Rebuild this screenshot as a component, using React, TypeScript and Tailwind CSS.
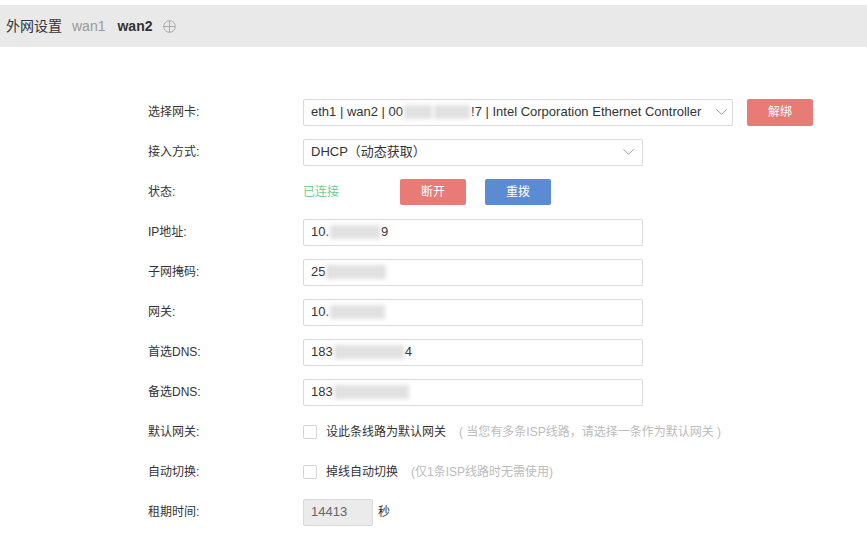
import React from "react";

const font = {
  fontFamily: '"Liberation Sans", "Noto Sans CJK SC", sans-serif',
};

const Blur = ({ w }: { w: number }) => (
  <span
    className="inline-block h-[14px] align-middle bg-[#e0e0e0] blur-[2px] mx-[1px]"
    style={{ width: w }}
  />
);

const Chevron = ({ right }: { right: string }) => (
  <svg width="11" height="7" viewBox="0 0 11 7" className={`absolute top-1/2 -translate-y-1/2 ${right}`}>
    <path d="M0.5 0.8 L5.5 5.8 L10.5 0.8" fill="none" stroke="#999" strokeWidth="1" />
  </svg>
);

const Row = ({ label, children }: { label: string; children: React.ReactNode }) => (
  <div className="flex h-10 items-center">
    <div className="w-[155px] text-[12px] text-[#333]">{label}</div>
    <div className="flex items-center">{children}</div>
  </div>
);

const Field = ({ children }: { children: React.ReactNode }) => (
  <div className="flex h-[27px] w-[340px] items-center rounded-[2px] border border-[#d9d9d9] bg-white px-[7px] text-[13px] text-[#333]">
    {children}
  </div>
);

const Check = ({ text, hint }: { text: string; hint: string }) => (
  <div className="flex items-center text-[12px]">
    <span className="h-[14px] w-[14px] rounded-[2px] border border-[#d4d4d4] bg-white" />
    <span className="ml-[9px] text-[#333]">{text}</span>
    <span className="ml-[13px] text-[#bbb]">{hint}</span>
  </div>
);

export default function App() {
  return (
    <div className="min-h-[536px] w-[867px] bg-white pt-[5px]" style={font}>
      <div className="flex h-[42px] items-center bg-[#e9e9e9] pl-[6px]">
        <span className="text-[14px] text-[#333]">外网设置</span>
        <span className="ml-[10px] text-[14px] text-[#999]">wan1</span>
        <span className="ml-[12px] text-[14px] font-bold text-[#333]">wan2</span>
        <svg width="13" height="13" viewBox="0 0 13 13" className="ml-[11px]">
          <circle cx="6.5" cy="6.5" r="5.8" fill="none" stroke="#aaa" strokeWidth="1" />
          <path d="M6.5 0.7 V12.3 M0.7 6.5 H12.3" stroke="#aaa" strokeWidth="1" />
        </svg>
      </div>

      <div className="pl-[148px] pt-[45px]">
        <Row label="选择网卡:">
          <div className="relative flex h-[27px] w-[430px] items-center rounded-[2px] border border-[#d9d9d9] bg-white px-[7px] text-[13px] text-[#333]">
            eth1 | wan2 | 00<Blur w={28} />
            <Blur w={36} />!7 | Intel Corporation Ethernet Controller
            <Chevron right="right-[5px]" />
          </div>
          <button className="ml-[14px] h-[27px] w-[66px] rounded-[2px] bg-[#e87b75] text-[12px] text-white">
            解绑
          </button>
        </Row>
        <Row label="接入方式:">
          <div className="relative flex h-[27px] w-[340px] items-center rounded-[2px] border border-[#d9d9d9] bg-white px-[7px] text-[13px] text-[#333]">
            DHCP（动态获取）
            <Chevron right="right-[8px]" />
          </div>
        </Row>
        <Row label="状态:">
          <span className="w-[97px] text-[12px] text-[#6fcb8f]">已连接</span>
          <button className="h-[26px] w-[66px] rounded-[2px] bg-[#e87b75] text-[12px] text-white">断开</button>
          <button className="ml-[19px] h-[26px] w-[66px] rounded-[2px] bg-[#5b8bd3] text-[12px] text-white">重拨</button>
        </Row>
        <Row label="IP地址:">
          <Field>
            10.<Blur w={50} />9
          </Field>
        </Row>
        <Row label="子网掩码:">
          <Field>
            25<Blur w={60} />
          </Field>
        </Row>
        <Row label="网关:">
          <Field>
            10.<Blur w={55} />
          </Field>
        </Row>
        <Row label="首选DNS:">
          <Field>
            183<Blur w={70} />4
          </Field>
        </Row>
        <Row label="备选DNS:">
          <Field>
            183<Blur w={75} />
          </Field>
        </Row>
        <Row label="默认网关:">
          <Check text="设此条线路为默认网关" hint="( 当您有多条ISP线路，请选择一条作为默认网关 )" />
        </Row>
        <Row label="自动切换:">
          <Check text="掉线自动切换" hint="(仅1条ISP线路时无需使用)" />
        </Row>
        <Row label="租期时间:">
          <div className="flex h-[27px] w-[70px] items-center rounded-[2px] border border-[#d9d9d9] bg-[#ebebeb] px-[7px] text-[13px] text-[#666]">
            14413
          </div>
          <span className="ml-[5px] text-[12px] text-[#333]">秒</span>
        </Row>
      </div>
    </div>
  );
}
